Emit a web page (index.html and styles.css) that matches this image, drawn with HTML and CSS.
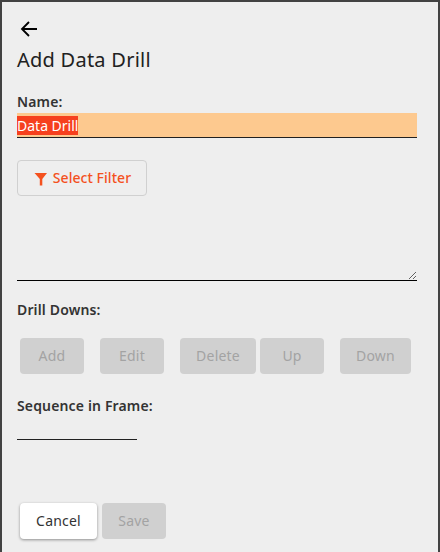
FILE: index.html
```html
<!DOCTYPE html>
<html lang="en">
<head>
    <meta charset="UTF-8">
    <meta name="viewport" content="width=device-width, initial-scale=1.0">
    <title>Add Data Drill</title>
    <link rel="stylesheet" href="styles.css">
</head>
<body>

    <div class="dialog">
        <button class="back-button" aria-label="Back">
            <svg width="24" height="24" viewBox="0 0 24 24"><path d="M20 12H5M12 5l-7 7 7 7"/></svg>
        </button>
        <h1 class="title">Add Data Drill</h1>

        <label class="field-label name-label">Name:</label>
        <div class="name-input"><span class="selected-text">Data Drill</span></div>

        <button class="filter-button">
            <svg width="14" height="14" viewBox="0 0 14 14"><path d="M0.5 1H13L8.3 7V13.5H5.8V7z"/></svg>
            Select Filter
        </button>

        <textarea class="filter-text"></textarea>

        <label class="field-label drill-label">Drill Downs:</label>
        <div class="drill-buttons">
            <button class="flat-button btn-add" disabled>Add</button>
            <button class="flat-button btn-edit" disabled>Edit</button>
            <button class="flat-button btn-delete" disabled>Delete</button>
            <button class="flat-button btn-up" disabled>Up</button>
            <button class="flat-button btn-down" disabled>Down</button>
        </div>

        <label class="field-label sequence-label">Sequence in Frame:</label>
        <div class="sequence-input"></div>

        <div class="footer-buttons">
            <button class="cancel-button">Cancel</button>
            <button class="flat-button btn-save" disabled>Save</button>
        </div>
    </div>

</body>
</html>
```

FILE: styles.css
```css
html, body {
    margin: 0;
    padding: 0;
}
body {
    font-family: "Noto Sans", sans-serif;
    background-color: #eeeeee;
}
button {
    font-family: inherit;
}
.dialog {
    box-sizing: border-box;
    width: 440px;
    height: 552px;
    border: 2px solid #424242;
    border-bottom: none;
    padding: 15px 21px 0 15px;
    display: flex;
    flex-direction: column;
    align-items: flex-start;
}
.back-button {
    border: none;
    background: none;
    padding: 0;
    height: 24px;
    width: 24px;
}
.back-button svg {
    display: block;
    fill: none;
    stroke: #000000;
    stroke-width: 1.85;
}
.title {
    margin: 0;
    margin-top: 4px;
    font-size: 20px;
    font-weight: 400;
    line-height: 30px;
    letter-spacing: 0.25px;
    color: #212121;
}
.field-label {
    font-size: 14px;
    font-weight: 600;
    line-height: 20px;
    letter-spacing: 0.15px;
    color: #333333;
}
.name-label {
    margin-top: 17px;
}
.name-input {
    box-sizing: border-box;
    width: 400px;
    height: 25px;
    margin-top: 1px;
    padding-top: 3px;
    background-color: #fdc98f;
    border-bottom: 1px solid #212121;
    font-size: 14px;
    line-height: 19px;
    color: #ffffff;
}
.selected-text {
    display: inline-block;
    background-color: #f6401e;
}
.filter-button {
    display: flex;
    align-items: center;
    justify-content: center;
    gap: 5px;
    box-sizing: border-box;
    width: 130px;
    height: 36px;
    margin-top: 22px;
    padding: 0 0 2px 1px;
    background: none;
    border: 1px solid #d0d0d0;
    border-radius: 4px;
    font-size: 14px;
    font-weight: 500;
    letter-spacing: 0.05px;
    color: #f4511e;
}
.filter-button svg {
    fill: #f4511e;
    margin-top: 3px;
}
.filter-text {
    box-sizing: border-box;
    display: block;
    width: 400px;
    height: 85px;
    padding: 0;
    background: none;
    border: none;
    border-bottom: 1px solid #000000;
    outline: none;
}
.drill-label {
    margin-top: 19px;
}
.drill-buttons {
    display: flex;
    margin-top: 18px;
    margin-left: 3px;
}
.flat-button {
    box-sizing: border-box;
    height: 36px;
    padding: 0 0 2px;
    border: none;
    border-radius: 4px;
    background-color: #d0d0d0;
    font-size: 14px;
    font-weight: 400;
    letter-spacing: 0.2px;
    color: #a3a3a3;
}
.btn-add, .btn-edit, .btn-up, .btn-save {
    width: 64px;
}
.btn-add, .btn-edit {
    margin-right: 16px;
}
.btn-delete {
    width: 76px;
    margin-right: 4px;
}
.btn-up {
    margin-right: 16px;
}
.btn-down {
    width: 71px;
}
.sequence-label {
    margin-top: 22px;
}
.sequence-input {
    width: 120px;
    height: 1px;
    margin-top: 23px;
    background-color: #212121;
}
.footer-buttons {
    display: flex;
    gap: 5px;
    margin-top: 63px;
    margin-left: 3px;
}
.cancel-button {
    box-sizing: border-box;
    width: 77px;
    height: 36px;
    padding: 0 0 2px;
    border: none;
    border-radius: 4px;
    background-color: #ffffff;
    box-shadow: 0 1px 3px rgba(0, 0, 0, 0.4);
    font-size: 14px;
    font-weight: 400;
    letter-spacing: 0.2px;
    color: #333333;
}
```
